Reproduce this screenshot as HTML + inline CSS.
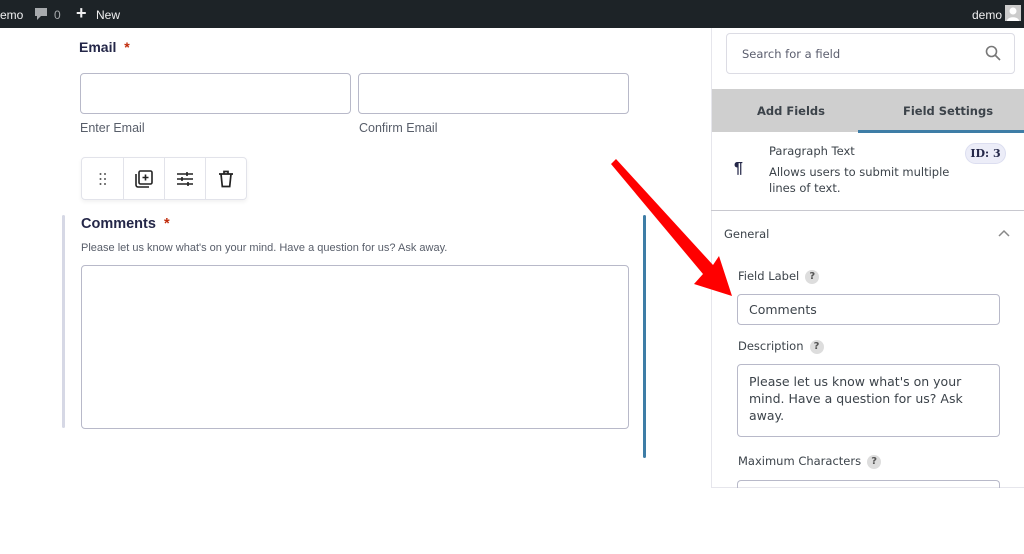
<!DOCTYPE html>
<html><head><style>
*{box-sizing:border-box;margin:0;padding:0}
body{width:1024px;height:554px;background:#fff;font-family:"Liberation Sans",sans-serif;position:relative;overflow:hidden;color:#242748}
.a{position:absolute}
.bar{left:0;top:0;width:1024px;height:28px;background:#1d2327;color:#f0f0f1;font-size:12px}
.in{border:1px solid #b8b9c9;border-radius:4px;background:#fff}
.sl{color:#2c3338;font-family:"DejaVu Sans",sans-serif;font-size:11.5px}
.q{display:inline-block;width:14px;height:14px;border-radius:7px;background:#ddd;color:#555;font-size:10px;text-align:center;line-height:14px;font-weight:bold;margin-left:6px;vertical-align:middle}
</style></head><body>
<div class="a bar">
 <span class="a" style="left:0;top:8px">emo</span>
 <svg class="a" style="left:34px;top:7px" width="14" height="14"><path d="M1 1h12v8H7l-4 4V9H1z" fill="#a7aaad"/></svg>
 <span class="a" style="left:54px;top:8px;color:#a7aaad">0</span>
 <span class="a" style="left:76px;top:3px;font-size:18px;font-weight:bold">+</span>
 <span class="a" style="left:96px;top:8px">New</span>
 <span class="a" style="left:972px;top:8px">demo</span>
 <div class="a" style="left:1005px;top:5px;width:16px;height:16px;background:#ccc"><svg width="16" height="16"><circle cx="8" cy="6" r="3.5" fill="#fff"/><path d="M2 16c0-5 12-5 12 0z" fill="#fff"/></svg></div>
</div>

<div class="a" style="left:79px;top:39px;font-size:14px;font-weight:bold">Email <span style="color:#c02b0a;margin-left:4px">*</span></div>
<div class="a in" style="left:80px;top:73px;width:271px;height:41px"></div>
<div class="a in" style="left:358px;top:73px;width:271px;height:41px"></div>
<div class="a" style="left:80px;top:121px;font-size:12.5px;color:#585e6a">Enter Email</div>
<div class="a" style="left:359px;top:121px;font-size:12.5px;color:#585e6a">Confirm Email</div>

<div class="a" style="left:81px;top:157px;width:166px;height:43px;border:1px solid #e2e3ea;border-radius:4px;box-shadow:0 2px 4px rgba(0,0,0,.06);display:flex">
 <div style="width:42px;border-right:1px solid #e2e3ea;display:flex;align-items:center;justify-content:center"><svg width="8" height="14"><g fill="#555"><circle cx="1.5" cy="2" r="1"/><circle cx="6" cy="2" r="1"/><circle cx="1.5" cy="7" r="1"/><circle cx="6" cy="7" r="1"/><circle cx="1.5" cy="12" r="1"/><circle cx="6" cy="12" r="1"/></g></svg></div>
 <div style="width:41px;border-right:1px solid #e2e3ea;display:flex;align-items:center;justify-content:center"><svg width="20" height="20" fill="none" stroke="#222" stroke-width="1.6"><path d="M2 5v11a2 2 0 0 0 2 2h11"/><rect x="5" y="2" width="13" height="13" rx="1.5"/><path d="M11.5 5.5v6M8.5 8.5h6"/></svg></div>
 <div style="width:41px;border-right:1px solid #e2e3ea;display:flex;align-items:center;justify-content:center"><svg width="18" height="16" stroke="#222" stroke-width="1.6"><path d="M1 3h16M1 8h16M1 13h16"/><path d="M11 1v4M6 6v4M12 11v4"/></svg></div>
 <div style="flex:1;display:flex;align-items:center;justify-content:center"><svg width="16" height="18" fill="none" stroke="#222" stroke-width="1.7"><path d="M1 4h14M6 4V1.5h4V4M3 4l1.3 12.5h7.4L13 4"/></svg></div>
</div>

<div class="a" style="left:62px;top:215px;width:3px;height:213px;background:#d6d8e5;border-radius:2px"></div>
<div class="a" style="left:643px;top:215px;width:3px;height:243px;background:#3e7da6;border-radius:2px"></div>
<div class="a" style="left:81px;top:216px;font-size:14.5px;font-weight:bold">Comments <span style="color:#c02b0a;margin-left:4px">*</span></div>
<div class="a" style="left:81px;top:242px;font-size:11px;color:#585e6a">Please let us know what's on your mind. Have a question for us? Ask away.</div>
<div class="a in" style="left:81px;top:265px;width:548px;height:164px"></div>

<!-- right panel -->
<div class="a" style="left:711px;top:28px;width:313px;height:460px;border-left:1px solid #e6e6ec;border-bottom:1px solid #e6e6ec"></div>
<div class="a in" style="left:726px;top:33px;width:289px;height:41px;border-color:#dcdce4"></div>
<div class="a sl" style="left:742px;top:47px;color:#5b5e6e">Search for a field</div>
<svg class="a" style="left:985px;top:45px" width="16" height="16" fill="none" stroke="#777" stroke-width="1.6"><circle cx="6.5" cy="6.5" r="5"/><path d="M10 10l5 5"/></svg>
<div class="a" style="left:712px;top:89px;width:312px;height:43px;background:#cfcfcf"></div>
<div class="a" style="left:858px;top:130px;width:166px;height:3px;background:#3e7da6"></div>
<div class="a sl" style="left:757px;top:104px;font-weight:bold;color:#3c434a">Add Fields</div>
<div class="a sl" style="left:903px;top:104px;font-weight:bold;color:#3c434a">Field Settings</div>
<div class="a" style="left:734px;top:160px;font-size:16px;font-weight:bold;color:#242748">¶</div>
<div class="a sl" style="left:769px;top:144px;color:#3c434a">Paragraph Text</div>
<div class="a sl" style="left:769px;top:164px;color:#3c434a;line-height:16px;width:190px">Allows users to submit multiple lines of text.</div>
<div class="a" style="left:965px;top:143px;width:41px;height:21px;border-radius:11px;background:#ecedf8;border:1px solid #dcdef0;font-size:11px;font-weight:bold;text-align:center;line-height:19px;font-family:'DejaVu Serif',serif">ID: 3</div>
<div class="a" style="left:711px;top:210px;width:313px;height:1px;background:#c8c8cf"></div>
<div class="a sl" style="left:724px;top:227px;color:#3c434a">General</div>
<svg class="a" style="left:998px;top:229px" width="12" height="8" fill="none" stroke="#888" stroke-width="1.5"><path d="M1 7l5-5 5 5"/></svg>
<div class="a sl" style="left:738px;top:269px;color:#3c434a">Field Label<span class="q">?</span></div>
<div class="a in" style="left:737px;top:294px;width:263px;height:31px"></div>
<div class="a" style="left:749px;top:302px;font-family:'DejaVu Sans',sans-serif;font-size:12.5px;color:#3c434a">Comments</div>
<div class="a sl" style="left:738px;top:339px;color:#3c434a">Description<span class="q">?</span></div>
<div class="a in" style="left:737px;top:364px;width:263px;height:73px"></div>
<div class="a" style="left:749px;top:373px;font-family:'DejaVu Sans',sans-serif;font-size:12.5px;color:#3c434a;line-height:17px;width:240px">Please let us know what's on your mind. Have a question for us? Ask away.</div>
<div class="a sl" style="left:738px;top:454px;color:#3c434a">Maximum Characters<span class="q">?</span></div>
<div class="a" style="left:737px;top:480px;width:263px;height:8px;border:1px solid #b8b9c9;border-bottom:none;border-radius:4px 4px 0 0"></div>

<svg class="a" style="left:0;top:0" width="1024" height="554"><path d="M611 164L616 159L713 265L719 256L732 296L694 284L703 274Z" fill="#f00"/></svg>
</body></html>
